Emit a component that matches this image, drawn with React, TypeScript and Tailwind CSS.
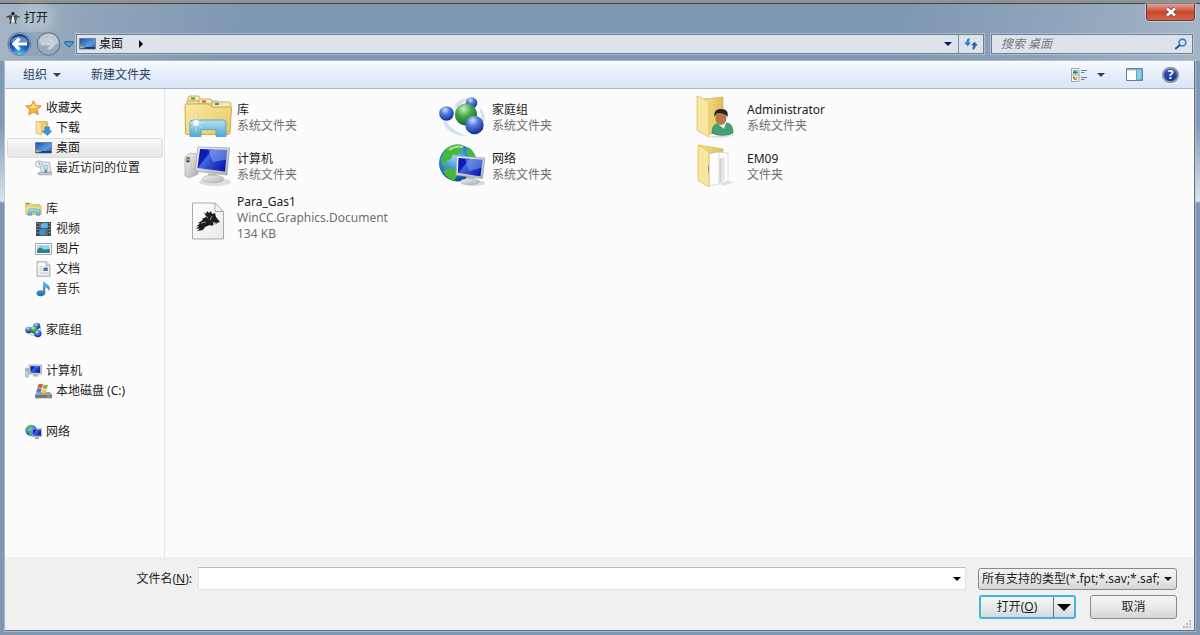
import type { ReactNode } from 'react';

type IconProps = { className?: string };

function Defs() {
  return (
    <svg className="absolute h-0 w-0" aria-hidden="true">
      <defs>
        <linearGradient id="gold" x1="0" y1="0" x2="1" y2="1">
          <stop offset="0" stopColor="#f8e9a6" />
          <stop offset="1" stopColor="#e6c95c" />
        </linearGradient>
        <linearGradient id="goldDark" x1="0" y1="0" x2="1" y2="0">
          <stop offset="0" stopColor="#f6e08c" />
          <stop offset="1" stopColor="#dfbd58" />
        </linearGradient>
        <linearGradient id="aqua" x1="0" y1="0" x2="0" y2="1">
          <stop offset="0" stopColor="#b6e0ee" />
          <stop offset="1" stopColor="#4fa9d8" />
        </linearGradient>
        <linearGradient id="screen" x1="0" y1="0" x2="1" y2="0.6">
          <stop offset="0" stopColor="#0716a8" />
          <stop offset="0.35" stopColor="#0b1fc0" />
          <stop offset="0.4" stopColor="#3f68e0" />
          <stop offset="1" stopColor="#0a1cb4" />
        </linearGradient>
        <linearGradient id="metal" x1="0" y1="0" x2="1" y2="1">
          <stop offset="0" stopColor="#f4f4f4" />
          <stop offset="1" stopColor="#a9adb0" />
        </linearGradient>
        <linearGradient id="desk" x1="0" y1="0" x2="1" y2="1">
          <stop offset="0" stopColor="#1c4c9c" />
          <stop offset="0.6" stopColor="#5b9ae4" />
          <stop offset="1" stopColor="#2559ae" />
        </linearGradient>
        <linearGradient id="page" x1="0" y1="0" x2="1" y2="1">
          <stop offset="0" stopColor="#ffffff" />
          <stop offset="1" stopColor="#e9e9e9" />
        </linearGradient>
        <linearGradient id="sheet" x1="0" y1="0" x2="1" y2="0">
          <stop offset="0" stopColor="#d4d4d4" />
          <stop offset="1" stopColor="#f8f8f8" />
        </linearGradient>
        <radialGradient id="blueBall" cx="0.4" cy="0.25" r="0.75">
          <stop offset="0" stopColor="#cfe0fb" />
          <stop offset="0.4" stopColor="#5580dd" />
          <stop offset="1" stopColor="#0f2c98" />
        </radialGradient>
        <radialGradient id="greenBall" cx="0.4" cy="0.25" r="0.75">
          <stop offset="0" stopColor="#c9f2c4" />
          <stop offset="0.45" stopColor="#47a94c" />
          <stop offset="1" stopColor="#0f6a20" />
        </radialGradient>
        <radialGradient id="globe" cx="0.4" cy="0.35" r="0.7">
          <stop offset="0" stopColor="#8fd4f6" />
          <stop offset="0.6" stopColor="#2b78cc" />
          <stop offset="1" stopColor="#0c3685" />
        </radialGradient>
        <radialGradient id="back" cx="0.5" cy="1" r="0.9">
          <stop offset="0" stopColor="#4fd4fa" />
          <stop offset="0.45" stopColor="#1c63c4" />
          <stop offset="1" stopColor="#16408f" />
        </radialGradient>
        <linearGradient id="note" x1="0" y1="0" x2="0" y2="1">
          <stop offset="0" stopColor="#6fbcec" />
          <stop offset="1" stopColor="#1672c4" />
        </linearGradient>
      </defs>
    </svg>
  );
}

function Caret({ className = '' }: IconProps) {
  return (
    <svg viewBox="0 0 8 4" className={`h-1 w-2 shrink-0 ${className}`} fill="currentColor" aria-hidden="true">
      <path d="M0 0h8L4 4z" />
    </svg>
  );
}

function Small({ children }: { children: ReactNode }) {
  return (
    <svg viewBox="0 0 16 16" preserveAspectRatio="none" className="h-4 w-[17px] shrink-0" aria-hidden="true">
      {children}
    </svg>
  );
}

function Big({ children }: { children: ReactNode }) {
  return (
    <svg viewBox="0 0 48 48" className="h-12 w-12 shrink-0" aria-hidden="true">
      {children}
    </svg>
  );
}

const StarIcon = () => (
  <Small>
    <path d="M8 .8l2.100 4.700 5.200.500-3.900 3.500 1.100 5.200L8 12l-4.500 2.700 1.100-5.200L.7 6l5.200-.5z" fill="#fdb43a" stroke="#e3812a" strokeWidth=".9" strokeLinejoin="round" />
    <path d="M8 2.600l1.400 3.700 3.800.4-5.200 1.600L3 6.700l3.600-.4z" fill="#ffe98b" />
  </Small>
);

const DownloadIcon = () => (
  <Small>
    <path d="M4 1.500h7l1 1V13H4z" fill="url(#goldDark)" stroke="#c6a64d" strokeWidth=".6" />
    <path d="M1 1l5 2v12L1 13z" fill="#f7e6a2" stroke="#cba94f" strokeWidth=".6" />
    <path d="M9.500 7h4v4h2.200L11.500 15.500 7.200 11h2.300z" fill="#3699e4" stroke="#1c6bb5" strokeWidth=".6" />
  </Small>
);

const DesktopIcon = () => (
  <Small>
    <path d="M.5 2.500h15v10.500H.5z" fill="url(#desk)" stroke="#68778c" strokeWidth=".8" />
    <path d="M1 11.200h14v1.500H1z" fill="#1b2f55" />
    <circle cx="2.300" cy="11.200" r="1.200" fill="#e8b92e" />
    <path d="M3.700 11.200h2v.8h-2z" fill="#61c4f2" />
  </Small>
);

const RecentIcon = () => (
  <Small>
    <path d="M4 2.200h9.500l1.800 10H6z" fill="#e7ebee" stroke="#98a0a5" strokeWidth=".7" />
    <path d="M8 5h4v4H8z" fill="#c1dbe8" stroke="#8aa6b4" strokeWidth=".5" />
    <path d="M3 12.400h12.500v2.400H3z" fill="#c8ccd0" stroke="#8c9194" strokeWidth=".6" />
    <path d="M9 9.500h2.500V13H9z" fill="#579bc0" />
    <circle cx="3.700" cy="4" r="3.200" fill="#eef4f8" stroke="#9ba6ae" strokeWidth=".8" />
    <path d="M3.700 2v2.200h1.500" stroke="#60717d" strokeWidth=".7" fill="none" />
  </Small>
);

const LibrarySmallIcon = () => (
  <Small>
    <path d="M.5 2.500h5l1 1h7.500v3H.5z" fill="#f3dd8c" stroke="#cfb055" strokeWidth=".6" />
    <path d="M1 1.800h3v1.600H1z" fill="#53aa42" />
    <path d="M.8 5h14.400v8.500H.8z" fill="url(#gold)" stroke="#cba94b" strokeWidth=".6" />
    <path d="M3 14.300V9.500C3 8.300 4 8 5 8h6.500c1.500 0 2.500.5 2.500 1.500v4.800h-3.200V11H6.400v3.300z" fill="url(#aqua)" stroke="#449bc8" strokeWidth=".6" />
  </Small>
);

const VideoIcon = () => (
  <Small>
    <path d="M1 1h14v14H1z" fill="#3a4a55" />
    <path d="M4 1.800h8v5.400H4z" fill="#5eb6e8" />
    <path d="M4 8.200h8v6H4z" fill="#3a92cf" />
    <path d="M4 1.800h3L5 4.800l1 2.400H4zM12 8.200L9 11l3 3.200z" fill="#8d4a37" />
    <path d="M2 2h1v1H2zM2 5h1v1H2zM2 8h1v1H2zM2 11h1v1H2zM13 2h1v1h-1zM13 5h1v1h-1zM13 8h1v1h-1zM13 11h1v1h-1z" fill="#aebac2" />
  </Small>
);

const PictureIcon = () => (
  <Small>
    <path d="M.5 2.500h15v11H.5z" fill="#fafafa" stroke="#8f989e" strokeWidth=".8" />
    <path d="M2.200 4.200h11.600v7.600H2.200z" fill="#8ed3f5" />
    <path d="M2.200 8l3-1.500L9 8.800l4.800-1v4H2.200z" fill="#2f8a5e" />
    <path d="M2.200 10.200h11.600v1.600H2.200z" fill="#2b73ae" />
  </Small>
);

const DocumentIcon = () => (
  <Small>
    <path d="M2 .8h8.500L14 4.300v10.900H2z" fill="url(#page)" stroke="#8e9499" strokeWidth=".8" />
    <path d="M10.500.8v3.500H14" fill="#dfe4e8" stroke="#8e9499" strokeWidth=".7" />
    <path d="M8 6.500h4V10H8z" fill="#3f77bb" />
    <path d="M4 5.500h3M4 7.500h3M4 9.500h3M4 12h8" stroke="#b4bcc3" strokeWidth=".7" />
  </Small>
);

const MusicIcon = () => (
  <Small>
    <path d="M7.500 1h2c.4 2 4.500 2.800 4.500 6 0 1.300-.5 2.300-1.200 3C13 7.500 11 6.600 9.700 6.400v5.300c0 2-1.800 3.500-4.500 3.500-2.200 0-3.800-1.100-3.800-2.900 0-1.900 1.700-3.100 3.800-3.100.9 0 1.700.2 2.300.5z" fill="url(#note)" />
  </Small>
);

const HomegroupSmallIcon = () => (
  <Small>
    <path d="M2 8c0 5 8 7 12 4M13.500 3c2 3 1 6 0 7" stroke="#aec4e6" strokeWidth="1.200" fill="none" />
    <circle cx="11" cy="4" r="3.300" fill="url(#blueBall)" />
    <circle cx="3.400" cy="8" r="3.200" fill="url(#blueBall)" />
    <circle cx="8.500" cy="7.800" r="3.600" fill="url(#greenBall)" />
    <circle cx="12" cy="11.600" r="3.600" fill="url(#blueBall)" />
  </Small>
);

const ComputerSmallIcon = () => (
  <Small>
    <path d="M.5 5h2.800v9H.5z" fill="#c9cdce" stroke="#8e9496" strokeWidth=".5" />
    <path d="M1 6.200h1.500v1.200H1z" fill="#4fae40" />
    <path d="M4 2h11.500v9H4z" fill="#d7dadd" stroke="#8d9296" strokeWidth=".6" />
    <path d="M5.200 3.200h9.100v6.600H5.200z" fill="url(#screen)" />
    <path d="M8.500 11h3l1.500 2.500H7z" fill="#b2b7ba" />
  </Small>
);

const DiskIcon = () => (
  <Small>
    <path d="M2 9.500h12l2 2.500v3H0v-3z" fill="#9ba3a8" stroke="#697378" strokeWidth=".5" />
    <path d="M.5 12.200h15v2.300H.5z" fill="#65737a" />
    <path d="M11.500 13h2.500v1h-2.500z" fill="#6be04a" />
    <path d="M3.200 1.500c1.500-1 3-1 4.300-.2L6.600 5C5.300 4.300 3.800 4.300 2.200 5z" fill="#e3552b" />
    <path d="M8.200 1.600c1.300.7 2.700.7 4.200-.1l-1 3.700c-1.500.8-2.800.8-4.100.1z" fill="#7cba3a" />
    <path d="M2 5.700c1.500-.8 3-.8 4.300 0l-1 3.700c-1.300-.7-2.800-.7-4.300 0z" fill="#3d83d6" />
    <path d="M7.100 6c1.300.7 2.600.7 4.100 0l-1 3.700c-1.500.8-2.800.7-4.100 0z" fill="#f6c32e" />
  </Small>
);

const NetworkSmallIcon = () => (
  <Small>
    <circle cx="5.800" cy="6.300" r="5.500" fill="url(#globe)" />
    <path d="M2 3c2-2.500 5-2.500 6-1.500L6 4 3.500 5 2.500 8 1 6zM4 8l3 1-1 2.200H4z" fill="#4fbd4e" />
    <path d="M6.500 4.800h9.200v7.700H6.500z" fill="#c6cbd0" stroke="#848b92" strokeWidth=".5" />
    <path d="M7.200 5.500h7.800v6.200H7.200z" fill="url(#screen)" />
    <path d="M10 12.500h2.500l1 2.500h-4.500z" fill="#9fa6ad" />
  </Small>
);

const LibraryIcon = () => (
  <Big>
    <path d="M4 4q0-2 2-2h8q2 0 2 2v3H4z" fill="#f5e7ac" stroke="#cdb064" />
    <path d="M7 3.500h4v2H7z" fill="#3da43c" />
    <path d="M3 7h31v12H3z" fill="#f3e19b" stroke="#d0b25f" />
    <path d="M15 7q0-2 2-2h9q2 0 2 2v3H15z" fill="#f7ebb6" stroke="#cdb064" />
    <path d="M18 6.500h4v2h-4z" fill="#df542c" />
    <path d="M10 10h32v9H10z" fill="#f2de93" stroke="#d0b25f" />
    <path d="M28 10q0-2 2-2h15q2 0 2 2v5H28z" fill="#f7e9ae" stroke="#cdb064" />
    <path d="M31 9h4v2h-4z" fill="#2f8dcc" />
    <path d="M1 11q0-1 1-1h22l4 3h18q1.500 0 1.500 1.500L46 39q0 1.500-2 1.500H3q-1.500 0-1.500-1.500z" fill="url(#gold)" stroke="#cbab52" />
    <path d="M6 42.500V29q0-3 3-3h30q3 0 3 3v13.500H32v-7H17v7z" fill="url(#aqua)" stroke="#5aa9cb" />
    <path d="M12 20v18M5 29h15M7 23l11 11M18 23L7 34" stroke="#fff" strokeWidth=".7" opacity=".6" />
    <circle cx="12" cy="29" r="3" fill="#fff" opacity=".8" />
  </Big>
);

const ComputerIcon = () => (
  <Big>
    <ellipse cx="31" cy="39" rx="16" ry="4" fill="#dedede" />
    <path d="M1 14l5-4 8 1v20l-9 4-4-2z" fill="url(#metal)" stroke="#a4a6a7" strokeWidth=".7" />
    <path d="M2.500 14.500l3-.5v5l-3 .5z" fill="#30452b" />
    <circle cx="4" cy="16.500" r="1.200" fill="#74df42" />
    <path d="M14 4l31.500 1-2.500 27-32-4z" fill="url(#metal)" stroke="#a6a8aa" strokeWidth=".8" />
    <path d="M16 6l27 1-2 21.500L13.500 25z" fill="url(#screen)" />
    <path d="M24 6.300l19 .7-.9 9.500L29 19z" fill="#9bbdff" opacity=".45" />
    <path d="M24 30.500l9 .8 1 5h-9z" fill="#b6b9bb" />
    <ellipse cx="29" cy="36" rx="11" ry="3.800" fill="url(#metal)" stroke="#aeb0b1" strokeWidth=".6" />
  </Big>
);

const GraphicsDocumentIcon = () => (
  <Big>
    <path d="M8.500 9H31l8.500 8.500V45H8.500z" fill="url(#page)" stroke="#a9a9a9" />
    <path d="M31 9v8.500h8.500z" fill="#f2f2f2" stroke="#a9a9a9" strokeLinejoin="round" />
    <path d="M20 18l2 2 1-3 2 2 2-2 1 3 3-1 1 4 4 5-2 .5-2 2-1-1.500-3 3-2-1-5 2-2 3-6 1 3-2.500-4 .5 3-3-3 .5 4-3-2-.5 5-3-1-1 4-2z" fill="#1d1d1d" />
    <path d="M21 21l3 3M28 22l-2 4M17 29l5-1" stroke="#bbb" strokeWidth=".8" />
    <path d="M29 28l5 1-5 2z" fill="#aaa" />
  </Big>
);

const HomegroupIcon = () => (
  <Big>
    <path d="M4 27c2 9 11 15 24 15-9-3-17-8-20-14zM15 13c4-8 14-11 20-7-8-1-13 3-17 8zM40 13c7 6 7 13 3 19 0-7-1-13-3-19z" fill="#d3e0f2" />
    <circle cx="32.500" cy="9" r="5.800" fill="url(#blueBall)" />
    <circle cx="7.500" cy="19.500" r="7.300" fill="url(#blueBall)" />
    <circle cx="27" cy="20.500" r="11" fill="url(#greenBall)" />
    <circle cx="35.500" cy="31" r="9.200" fill="url(#blueBall)" />
  </Big>
);

const NetworkIcon = () => (
  <Big>
    <circle cx="18.500" cy="20" r="18.500" fill="url(#globe)" />
    <path d="M7 6c7-6 15-5 18-3l-4 3 3 2-6 4-4-1-2 5-5 2-1 6-3-2c-1-6 1-12 4-16zM29 4c5 3 8 8 8.500 13L31 15l-4-5zM9 25l8 1 2 5-4 7C9 36 6 32 4 28z" fill="#45b83c" />
    <path d="M10 7q7-5 14-3" stroke="#d4f9b5" strokeWidth="2" fill="none" opacity=".7" />
    <ellipse cx="34" cy="40" rx="12" ry="3" fill="#d6d8da" />
    <path d="M17.500 13l28.500 2-2.500 20.500L17 32z" fill="url(#metal)" stroke="#a3a6a9" strokeWidth=".7" />
    <path d="M19.500 15l24 1.700-2 16.500L19 30z" fill="url(#screen)" />
    <path d="M26 15.500l17.500 1.200-1 8L30 28z" fill="#a4c3ff" opacity=".4" />
    <path d="M27 33.500l8 1v4h-8z" fill="#b6babd" />
    <ellipse cx="31" cy="38.500" rx="9.500" ry="3" fill="url(#metal)" stroke="#a9acae" strokeWidth=".6" />
  </Big>
);

const UserFolderIcon = () => (
  <Big>
    <path d="M12 43l20-3 9 1-12 3z" fill="#dcdcdc" />
    <path d="M10 5l19-2v34l-16 4z" fill="url(#goldDark)" stroke="#cfae55" strokeWidth=".7" />
    <path d="M3 2l11 5q1 .5 1 2v33q0 1-1 .5L4 37q-1-.5-1-2z" fill="#f8e79f" stroke="#d7bb65" strokeWidth=".8" />
    <path d="M18 39c0-7 3-9 8-10l5 3 1-3c5 0 7 4 7 10-6 3-15 3-21 0z" fill="#41a375" stroke="#2a805a" strokeWidth=".7" />
    <path d="M23 29l7 6 2-6-3-2z" fill="#eef5ee" />
    <ellipse cx="27" cy="24" rx="5.500" ry="7" fill="#b87747" />
    <path d="M20.500 23c-1-7 3-8 7-8 5 0 7 3 6 8-2-3-5-4-9-4-2 0-3 2-4 4z" fill="#252525" />
  </Big>
);

const FolderIcon = () => (
  <Big>
    <path d="M26 41l8-3 7 1-12 4z" fill="#e2e2e2" />
    <path d="M5 2l24 4v6l-12 3z" fill="url(#goldDark)" stroke="#d5b661" strokeWidth=".7" />
    <path d="M22 9l12 1v28l-9 3z" fill="#fff" stroke="#d0d0d0" strokeWidth=".7" />
    <path d="M15 11l9-2q1 0 1 1v31l-10 2z" fill="#fdfdfd" stroke="#c9c9c9" strokeWidth=".7" />
    <path d="M26 16l4-1v22l-4 2z" fill="url(#sheet)" stroke="#c0c0c0" strokeWidth=".6" />
    <path d="M4 2l10 6q1 .5 1 2v33q0 1-1 .5L5 38q-1-.5-1-2z" fill="#f8e79f" stroke="#d7bb65" strokeWidth=".8" />
    <path d="M14 23l1-1v7l-1 1z" fill="#6d9cc4" />
  </Big>
);

type Place = { name: string; icon: ReactNode; child?: boolean; active?: boolean };

const placeGroups: Place[][] = [
  [
    { name: '收藏夹', icon: <StarIcon /> },
    { name: '下载', icon: <DownloadIcon />, child: true },
    { name: '桌面', icon: <DesktopIcon />, child: true, active: true },
    { name: '最近访问的位置', icon: <RecentIcon />, child: true },
  ],
  [
    { name: '库', icon: <LibrarySmallIcon /> },
    { name: '视频', icon: <VideoIcon />, child: true },
    { name: '图片', icon: <PictureIcon />, child: true },
    { name: '文档', icon: <DocumentIcon />, child: true },
    { name: '音乐', icon: <MusicIcon />, child: true },
  ],
  [{ name: '家庭组', icon: <HomegroupSmallIcon /> }],
  [
    { name: '计算机', icon: <ComputerSmallIcon /> },
    { name: '本地磁盘 (C:)', icon: <DiskIcon />, child: true },
  ],
  [{ name: '网络', icon: <NetworkSmallIcon /> }],
];

type Entry = { name: string; details: string[]; icon: ReactNode };

const entries: Entry[] = [
  { name: '库', details: ['系统文件夹'], icon: <LibraryIcon /> },
  { name: '家庭组', details: ['系统文件夹'], icon: <HomegroupIcon /> },
  { name: 'Administrator', details: ['系统文件夹'], icon: <UserFolderIcon /> },
  { name: '计算机', details: ['系统文件夹'], icon: <ComputerIcon /> },
  { name: '网络', details: ['系统文件夹'], icon: <NetworkIcon /> },
  { name: 'EM09', details: ['文件夹'], icon: <FolderIcon /> },
  { name: 'Para_Gas1', details: ['WinCC.Graphics.Document', '134 KB'], icon: <GraphicsDocumentIcon /> },
];

function TitleBar() {
  return (
    <header className="flex h-7 items-start justify-between pl-[6px] pr-[5px]">
      <div className="flex h-7 items-center gap-[4px]">
        <svg viewBox="0 0 14 14" className="h-[14px] w-[14px]" aria-hidden="true">
          <path d="M7 1v3M4 4.500L2 6H0M10 4.500L12 6h2M4.500 4L3.500 8.500M9.500 4l1 4.500M5.500 5L4 13M8.500 5L10 13" stroke="#333" strokeWidth="1.100" fill="none" />
          <circle cx="7" cy="2.800" r="1.700" fill="#111" />
          <path d="M6 6h2v5H6z" fill="#f3f6f8" />
        </svg>
        <h1 className="rounded-full bg-white/20 text-xs text-[#15191e] shadow-[0_0_8px_6px_rgba(255,255,255,0.2)]">打开</h1>
      </div>
      <button
        type="button"
        aria-label="关闭"
        className="flex h-[17px] w-[49px] items-center justify-center rounded-b border border-t-0 border-[#6b3b3a] bg-linear-to-b from-[#e0a095] via-[#c9452f] via-50% to-[#d5654a] shadow-[0_0_0_1px_rgba(255,255,255,0.35)]"
      >
        <svg viewBox="0 0 12 10" className="h-[10px] w-3" aria-hidden="true">
          <path d="M2 1.500l8 7M10 1.500l-8 7" stroke="#5a4a50" strokeWidth="4" />
          <path d="M2 1.500l8 7M10 1.500l-8 7" stroke="#fff" strokeWidth="2.600" />
        </svg>
      </button>
    </header>
  );
}

function NavigationBar() {
  return (
    <nav className="flex h-[29px] items-center px-[7px] pb-[5px]">
      <div className="flex items-center gap-1 rounded-full bg-[#8299b1]/50">
        <button type="button" aria-label="后退" className="h-6 w-[25px]">
          <svg viewBox="0 0 25 24" className="h-6 w-[25px]" aria-hidden="true">
            <circle cx="12.500" cy="12" r="11.300" fill="#b9c9da" stroke="#5d7796" />
            <circle cx="12.500" cy="12" r="10.300" fill="url(#back)" />
            <path d="M3.500 10a9.500 8 0 0 1 18 0q-9 4-18 0z" fill="#fff" opacity=".35" />
            <path d="M20 12H8M12.500 6.500L7 12l5.500 5.500" stroke="#fff" strokeWidth="3.200" fill="none" />
          </svg>
        </button>
        <button type="button" aria-label="前进" className="h-6 w-[25px]">
          <svg viewBox="0 0 25 24" className="h-6 w-[25px]" aria-hidden="true">
            <circle cx="12.500" cy="12" r="11.300" fill="#98a9b9" stroke="#60758c" />
            <path d="M2.500 11a10 9.500 0 0 1 20 0q-10 4-20 0z" fill="#dbe1e7" opacity=".6" />
            <path d="M5 12h12M12.500 6.500L18 12l-5.500 5.500" stroke="#c9d2da" strokeWidth="3" fill="none" />
          </svg>
        </button>
      </div>
      <button type="button" aria-label="最近的页面" className="flex h-5 w-[15px] items-center justify-center">
        <svg viewBox="0 0 10 7" className="h-[7px] w-[10px]" aria-hidden="true">
          <path d="M.8.8h8.400v1.400L5 6.200.8 2.200z" fill="#4aa8dc" stroke="#235786" />
        </svg>
      </button>
      <div className="flex h-5 min-w-0 grow items-center border border-[#6f8093] bg-[#dce3eb] shadow-[0_0_0_1px_rgba(255,255,255,0.3)]">
        <button type="button" className="flex min-w-0 grow items-center gap-[3px] pl-[2px] text-xs text-[#15191e]">
          <DesktopIcon />
          桌面
          <svg viewBox="0 0 4 8" className="ml-[13px] h-[8px] w-1" fill="#000" aria-hidden="true">
            <path d="M0 0l4 4-4 4z" />
          </svg>
        </button>
        <button type="button" aria-label="以前的位置" className="flex h-full w-[21px] items-center justify-center text-[#101455]">
          <Caret />
        </button>
        <button type="button" aria-label="刷新" className="flex h-full w-[25px] items-center justify-center border-l border-[#8291a1]">
          <svg viewBox="0 0 14 12" className="h-3 w-[14px]" fill="#2f7fc8" aria-hidden="true">
            <path d="M5.500.300v2Q4.900 2.800 4.900 4v.500h2.300L3.700 8.200.100 4.500h2.300V4C2.400 1.800 3.600.500 5.500.300z" />
            <path d="M8.500 11.700v-2q.700-.500.700-1.700v-.500H7L10.500 3.800l3.500 3.700h-2.300V8c0 2.200-1.300 3.500-3.200 3.700z" fill="#2961ac" />
          </svg>
        </button>
      </div>
      <label className="ml-[7px] flex h-5 w-[202px] items-center border border-[#6f8093] bg-[#dce3eb] pl-[9px] pr-[5px] shadow-[0_0_0_1px_rgba(255,255,255,0.3)]">
        <input
          type="text"
          aria-label="搜索 桌面"
          placeholder="搜索 桌面"
          className="min-w-0 grow bg-transparent text-xs italic text-[#15191e] outline-none placeholder:text-[#747a80]"
        />
        <svg viewBox="0 0 13 12" className="h-3 w-[13px]" fill="none" aria-hidden="true">
          <circle cx="8.500" cy="4.500" r="3.400" stroke="#3389cb" strokeWidth="1.700" />
          <path d="M6 7l-4.800 4" stroke="#26569e" strokeWidth="2.200" />
        </svg>
      </label>
    </nav>
  );
}

function Toolbar() {
  return (
    <div className="flex h-7 items-center justify-between border-b border-[#a6b7d3] bg-linear-to-b from-[#f8fbff] via-[#e6eefa] via-50% to-[#dae5f4] pl-[18px] pr-[15px] text-xs text-[#2c3f5c]">
      <div className="flex items-center gap-[30px]">
        <button type="button" className="flex items-center gap-[6px]">
          组织
          <Caret />
        </button>
        <button type="button">新建文件夹</button>
      </div>
      <div className="flex items-center">
        <button type="button" aria-label="更改您的视图" className="flex items-center">
          <svg viewBox="0 0 17 14" className="h-[14px] w-[17px]" aria-hidden="true">
            <path d="M.5.500h7.500v13H.5zM.5 7H8" fill="#f6f6f6" stroke="#8b949d" strokeWidth=".8" />
            <path d="M2 2.200h4.500v3H2z" fill="#45a6b8" />
            <path d="M2 4h4.500v1.500H2z" fill="#1f8352" />
            <path d="M2 8.800h2v2H2z" fill="#e3492d" />
            <path d="M4.300 8.800h2.200v2H4.300z" fill="#e8c321" />
            <path d="M3 10.800h2.500v1.300H3z" fill="#57ab2d" />
            <path d="M10 2.500h6M10 4.500h3.500M10 9.500h6M10 11.500h3.500" stroke="#67839c" />
          </svg>
        </button>
        <button type="button" aria-label="更多选项" className="ml-[9px] flex h-5 w-2 items-center">
          <Caret />
        </button>
        <button type="button" aria-label="显示预览窗格" className="ml-[21px]">
          <svg viewBox="0 0 17 13" className="block h-[13px] w-[17px]" aria-hidden="true">
            <path d="M.5.500h16v12H.5z" fill="#fff" stroke="#6b7f93" />
            <path d="M1 1h15v1.500H1z" fill="#9fb4c6" />
            <path d="M10.500 1H16v11h-5.500z" fill="#83cfe4" stroke="#5596ae" strokeWidth=".8" />
          </svg>
        </button>
        <button type="button" aria-label="获取帮助" className="ml-[19px] flex h-4 w-[17px] items-center justify-center rounded-full border-2 border-[#8d929b] bg-linear-to-b from-[#3659c4] to-[#1533a0] text-xs font-bold leading-none text-white">
          ?
        </button>
      </div>
    </div>
  );
}

function Sidebar() {
  return (
    <aside className="flex w-[160px] shrink-0 flex-col gap-[21px] border-r border-[#dbe8f5] pl-[2px] pr-[1px] pt-[9px]">
      {placeGroups.map((group) => (
        <ul key={group[0].name}>
          {group.map((place) => (
            <li key={place.name}>
              <a
                href="#"
                className={`flex h-5 items-center gap-1 rounded-[3px] border ${place.child ? 'pl-[27px]' : 'pl-[17px]'} ${
                  place.active ? 'border-[#dedede] bg-linear-to-b from-[#f8f8f8] to-[#e6e6e6]' : 'border-transparent'
                }`}
              >
                {place.icon}
                <span className="whitespace-nowrap">{place.name}</span>
              </a>
            </li>
          ))}
        </ul>
      ))}
    </aside>
  );
}

function FileList() {
  return (
    <main className="grid grow grid-cols-[repeat(auto-fill,255px)] content-start pl-[19px] pt-1">
      {entries.map((entry) => (
        <button key={entry.name} type="button" className="flex min-h-[49px] items-center gap-[5px] text-left leading-4">
          {entry.icon}
          <span className="flex flex-col whitespace-nowrap py-[3px]">
            <span>{entry.name}</span>
            {entry.details.map((detail) => (
              <span key={detail} className="text-[#6f6f6f]">
                {detail}
              </span>
            ))}
          </span>
        </button>
      ))}
    </main>
  );
}

function Footer() {
  return (
    <footer className="relative flex flex-col gap-[5px] bg-[#f0f0f0] pb-[11px] pr-[17px] pt-[10px]">
      <div className="flex h-[23px] items-center">
        <label htmlFor="file-name" className="w-[193px] shrink-0 pr-[6px] text-right">
          文件名(<u>N</u>):
        </label>
        <div className="flex h-[23px] min-w-0 grow items-center border border-[#e2e3ea] border-t-[#b9bcc4] bg-white">
          <input id="file-name" type="text" className="h-full min-w-0 grow bg-transparent px-1 outline-none" />
          <button type="button" aria-label="以前的文件名" className="flex h-full w-4 items-center justify-center text-black">
            <Caret />
          </button>
        </div>
        <div className="relative ml-3 flex w-[199px] shrink-0 items-center">
          <select
            aria-label="文件类型"
            className="h-[22px] w-full appearance-none overflow-hidden rounded-[3px] border border-[#8a8a8a] bg-linear-to-b from-[#f4f4f4] via-[#e9e9e9] via-50% to-[#d6d6d6] pl-[3px] pr-[14px] outline-none"
          >
            <option>所有支持的类型(*.fpt;*.sav;*.saf;</option>
          </select>
          <Caret className="pointer-events-none absolute right-[5px]" />
        </div>
      </div>
      <div className="flex h-6 justify-end gap-[14px]">
        <div className="flex w-[97px] rounded-[3px] border-2 border-[#45b4dc] bg-linear-to-b from-[#f4f6f7] via-[#e8ebed] via-50% to-[#d3dadd]">
          <button type="button" className="grow">
            打开(<u>O</u>)
          </button>
          <button type="button" aria-label="打开选项" className="flex w-[21px] items-center justify-center border-l border-[#6e6e6e] text-black">
            <svg viewBox="0 0 14 7" className="h-[7px] w-[14px]" fill="currentColor" aria-hidden="true">
              <path d="M0 0h14L7 7z" />
            </svg>
          </button>
        </div>
        <button type="button" className="w-[87px] rounded-[3px] border border-[#8a8a8a] bg-linear-to-b from-[#f4f4f4] via-[#e9e9e9] via-50% to-[#d6d6d6]">
          取消
        </button>
      </div>
      <svg viewBox="0 0 9 9" className="absolute bottom-[1px] right-[2px] h-[9px] w-[9px]" fill="#bcbcbc" aria-hidden="true">
        <path d="M6 0h2v2H6zM3 3h2v2H3zM6 3h2v2H6zM0 6h2v2H0zM3 6h2v2H3zM6 6h2v2H6z" />
      </svg>
    </footer>
  );
}

export default function App() {
  return (
    <div className="flex min-h-screen flex-col border-t-[3px] border-[#929292] bg-[#7f97b2] bg-[linear-gradient(to_bottom,#a9b9c9_0px,#8299b3_60px,#8299b3_120px,#dbe2ea_198px,#7f97b2_200px,#7f97b2_100%)] font-['Noto_Sans','Noto_Sans_CJK_SC',sans-serif] text-xs text-[#1c1c1c]">
      <Defs />
      <div className="flex grow flex-col border-t border-[#3f454c]">
        <div className="bg-[linear-gradient(100deg,#a6b6c6_0px,#8fa4b9_90px,#7f98b3_240px,#7f98b3_75%,#8fa5bb_88%,#a4b5c7_100%)]">
          <TitleBar />
          <NavigationBar />
        </div>
        <div className="mx-[5px] mb-[4px] flex grow flex-col border-b border-r border-[#5f7285] bg-[#fcfcfc] shadow-[0_0_0_1px_rgba(190,205,220,0.6)]">
          <Toolbar />
          <div className="flex grow">
            <Sidebar />
            <FileList />
          </div>
          <Footer />
        </div>
      </div>
    </div>
  );
}
